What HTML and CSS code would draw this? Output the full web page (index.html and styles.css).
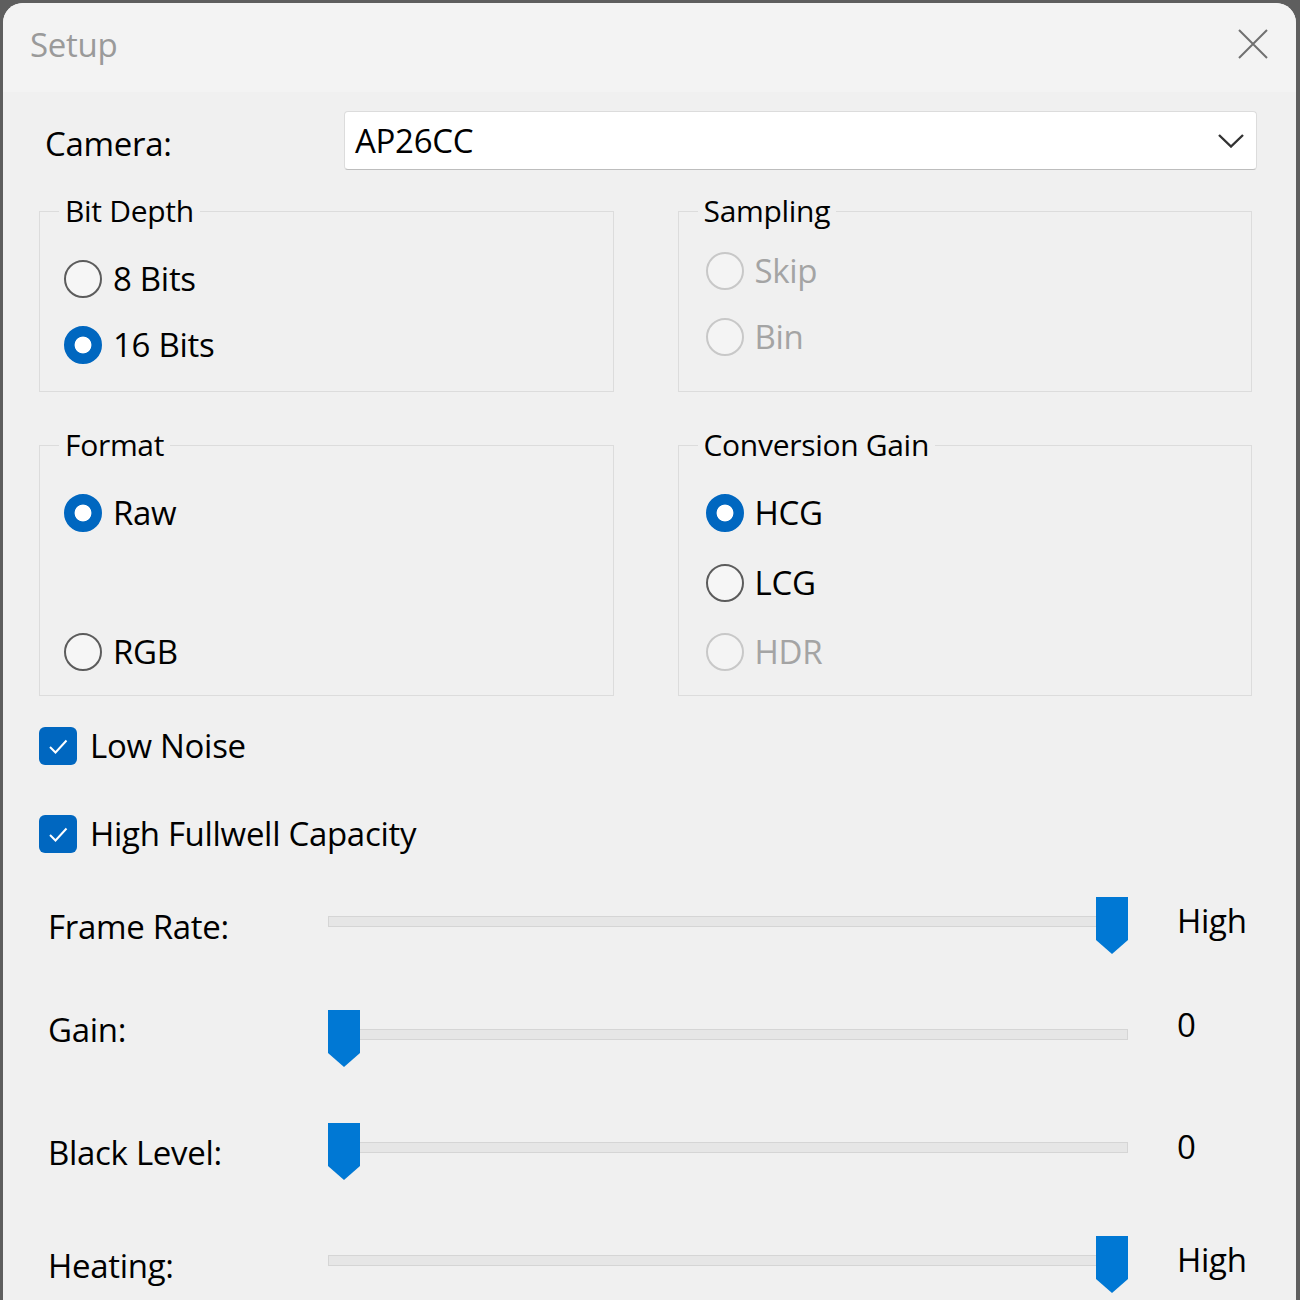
FILE: index.html
```html
<!DOCTYPE html>
<html lang="en">
<head>
    <meta charset="UTF-8">
    <meta name="viewport" content="width=device-width, initial-scale=1.0">
    <link rel="stylesheet" href="styles.css">
    <title>Setup</title>
</head>
<body>
    <div class="window">
        <div class="titlebar">
            <span class="title">Setup</span>
            <svg class="close" width="30" height="30" viewBox="0 0 30 30"><path d="M1 1 L29 29 M29 1 L1 29"/></svg>
        </div>

        <div class="content">
            <div class="camera-row">
                <span class="camera-label">Camera:</span>
                <div class="combo">
                    <span>AP26CC</span>
                    <svg class="chevron" width="26" height="14" viewBox="0 0 26 14"><path d="M1 1 L13 12.5 L25 1"/></svg>
                </div>
            </div>

            <div class="groups">
                <fieldset class="group">
                    <legend>Bit Depth</legend>
                    <div class="options">
                        <div class="radio"><span class="dot"></span>8 Bits</div>
                        <div class="radio checked"><span class="dot"></span>16 Bits</div>
                    </div>
                </fieldset>

                <fieldset class="group right">
                    <legend>Sampling</legend>
                    <div class="options tight">
                        <div class="radio disabled"><span class="dot"></span>Skip</div>
                        <div class="radio disabled"><span class="dot"></span>Bin</div>
                    </div>
                </fieldset>

                <fieldset class="group">
                    <legend>Format</legend>
                    <div class="options tall">
                        <div class="radio checked"><span class="dot"></span>Raw</div>
                        <div class="radio"><span class="dot"></span>RGB</div>
                    </div>
                </fieldset>

                <fieldset class="group right">
                    <legend>Conversion Gain</legend>
                    <div class="options tall">
                        <div class="radio checked"><span class="dot"></span>HCG</div>
                        <div class="radio"><span class="dot"></span>LCG</div>
                        <div class="radio disabled"><span class="dot"></span>HDR</div>
                    </div>
                </fieldset>
            </div>

            <div class="checks">
                <div class="check">
                    <span class="box"><svg width="38" height="38" viewBox="0 0 38 38"><path d="M11 20 L16.5 25.5 L27.5 13.5"/></svg></span>
                    Low Noise
                </div>
                <div class="check">
                    <span class="box"><svg width="38" height="38" viewBox="0 0 38 38"><path d="M11 20 L16.5 25.5 L27.5 13.5"/></svg></span>
                    High Fullwell Capacity
                </div>
            </div>

            <div class="sliders">
                <div class="slider-row">
                    <span class="slider-label">Frame Rate:</span>
                    <div class="slider">
                        <div class="track"></div>
                        <svg class="thumb" style="--pos: 1" width="32" height="57" viewBox="0 0 32 57"><polygon points="0,0 32,0 32,43 16,57 0,43"/></svg>
                    </div>
                    <span class="slider-value">High</span>
                </div>
                <div class="slider-row compact">
                    <span class="slider-label">Gain:</span>
                    <div class="slider">
                        <div class="track"></div>
                        <svg class="thumb" style="--pos: 0" width="32" height="57" viewBox="0 0 32 57"><polygon points="0,0 32,0 32,43 16,57 0,43"/></svg>
                    </div>
                    <span class="slider-value">0</span>
                </div>
                <div class="slider-row">
                    <span class="slider-label">Black Level:</span>
                    <div class="slider">
                        <div class="track"></div>
                        <svg class="thumb" style="--pos: 0" width="32" height="57" viewBox="0 0 32 57"><polygon points="0,0 32,0 32,43 16,57 0,43"/></svg>
                    </div>
                    <span class="slider-value">0</span>
                </div>
                <div class="slider-row">
                    <span class="slider-label">Heating:</span>
                    <div class="slider">
                        <div class="track"></div>
                        <svg class="thumb" style="--pos: 1" width="32" height="57" viewBox="0 0 32 57"><polygon points="0,0 32,0 32,43 16,57 0,43"/></svg>
                    </div>
                    <span class="slider-value">High</span>
                </div>
            </div>
        </div>
    </div>
</body>
</html>
```

FILE: styles.css
```css
* {
    box-sizing: border-box;
}

body {
    margin: 0;
    overflow: hidden;
    background-color: #5e5e5e;
    font-family: "Open Sans", "Noto Sans", sans-serif;
    font-size: 33px;
    line-height: 40px;
    letter-spacing: -0.3px;
    color: #000;
}

.window {
    height: 1297px;
    margin: 3px 4px 0 3px;
    background-color: #f0f0f0;
    border-radius: 20px 20px 0 0;
    overflow: hidden;
}

.titlebar {
    display: flex;
    align-items: flex-start;
    height: 89px;
    padding: 22px 28px 0 27px;
    background-color: #f3f3f3;
}

.title {
    color: #9a9a9a;
}

.close {
    margin-left: auto;
    margin-top: 4px;
    fill: none;
    stroke: #707070;
    stroke-width: 2;
}

.content {
    padding: 19px 39px 0 36px;
}

/* camera picker */
.camera-row {
    display: flex;
    align-items: center;
}

.camera-label {
    flex: none;
    width: 299px;
    margin-left: 6px;
    padding-top: 6px;
}

.combo {
    flex: 1;
    display: flex;
    align-items: center;
    justify-content: space-between;
    height: 59px;
    padding: 0 12px 0 10px;
    background-color: #fff;
    border: 1px solid #dcdcdc;
    border-bottom-color: #bdbdbd;
    border-radius: 4px;
}

.chevron {
    fill: none;
    stroke: #333;
    stroke-width: 2.4;
}

/* group boxes */
.groups {
    display: grid;
    grid-template-columns: 1fr 1fr;
    column-gap: 64px;
    row-gap: 33px;
    margin: 21px 5px 0 0;
}

.group {
    min-width: 0;
    margin: 0;
    padding: 0;
    border: 1px solid #dcdcdc;
}

.group legend {
    margin-left: 19px;
    padding: 0 6px;
    font-size: 30px;
}

.options {
    display: flex;
    flex-direction: column;
    gap: 26px;
    padding: 28px 0 26px 24px;
}

.right .options {
    padding-left: 27px;
}

.options.tight {
    padding-top: 20px;
}

.options.tall {
    height: 230px;
    padding-bottom: 23px;
    justify-content: space-between;
}

.radio {
    display: flex;
    align-items: center;
    gap: 11px;
    height: 40px;
}

.dot {
    flex: none;
    width: 38px;
    height: 38px;
    border: 2.5px solid #5c5c5c;
    border-radius: 50%;
    background-color: #f6f6f6;
}

.radio.checked .dot {
    border-color: #0067c0;
    background: radial-gradient(circle, #fff 0 8px, #0067c0 8.8px);
}

.radio.disabled {
    color: #a4a4a4;
}

.radio.disabled .dot {
    border-color: #c8c8c8;
    background-color: #f4f4f4;
}

/* checkboxes */
.checks {
    display: flex;
    flex-direction: column;
    gap: 50px;
    margin-top: 31px;
}

.check {
    display: flex;
    align-items: center;
    gap: 13px;
    height: 38px;
}

.box {
    flex: none;
    width: 38px;
    height: 38px;
    border-radius: 6px;
    background-color: #0067c0;
}

.box svg {
    display: block;
    fill: none;
    stroke: #fff;
    stroke-width: 2;
}

/* sliders */
.sliders {
    display: flex;
    flex-direction: column;
    gap: 56px;
    margin-top: 44px;
}

.slider-row {
    display: grid;
    grid-template-columns: 280px 800px auto;
    height: 57px;
    margin-left: 9px;
}

.slider-label {
    padding-top: 10px;
}

.slider {
    position: relative;
}

.track {
    position: absolute;
    top: 19px;
    left: 0;
    right: 0;
    height: 11px;
    background-color: #e6e6e6;
    border: 1px solid #d5d5d5;
}

.thumb {
    position: absolute;
    top: 0;
    left: calc((100% - 32px) * var(--pos));
    fill: #0078d4;
}

.slider-value {
    margin-left: 49px;
    padding-top: 4px;
}

.compact .slider-label {
    padding-top: 0;
}

.compact .slider-value {
    margin-top: -5px;
    padding-top: 0;
}
```
